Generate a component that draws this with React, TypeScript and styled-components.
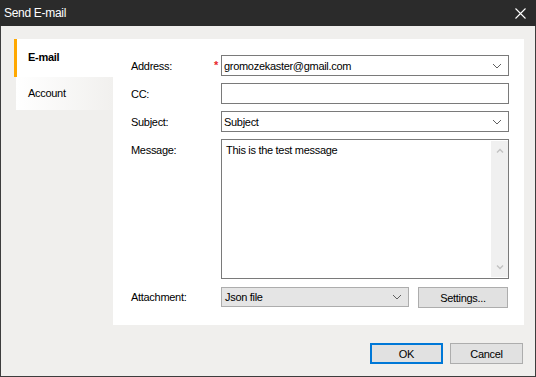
import React from 'react'
import styled, { createGlobalStyle } from 'styled-components'

const GlobalStyle = createGlobalStyle`
  html, body {
    margin: 0;
    padding: 0;
    background: #f0efed;
  }
  body {
    font-family: "Liberation Sans", Arial, sans-serif;
    font-size: 11px;
    letter-spacing: -0.3px;
    color: #000;
  }
`

const Window = styled.div`
  box-sizing: border-box;
  width: 536px;
  height: 377px;
  display: flex;
  flex-direction: column;
  background: #f0efed;
  border: 1px solid #3d3d3d;
  border-top: none;
`

const TitleBar = styled.div`
  height: 26px;
  margin: 0 -1px;
  flex: none;
  display: flex;
  align-items: center;
  justify-content: space-between;
  background: #2b2b2b;
  color: #fff;
  font-size: 12px;
  padding: 0 10px 0 4px;
`

const Body = styled.div`
  flex: 1;
  display: flex;
  flex-direction: column;
  padding: 13px 11px 12px 13px;
  min-height: 0;
`

const Main = styled.div`
  display: flex;
  height: 286px;
`

const TabList = styled.div`
  width: 99px;
  display: flex;
  flex-direction: column;
`

const Tab = styled.div<{ $active?: boolean }>`
  box-sizing: border-box;
  display: flex;
  align-items: center;
  height: ${p => (p.$active ? '38px' : '33px')};
  margin-left: ${p => (p.$active ? '0' : '2px')};
  padding-left: ${p => (p.$active ? '11px' : '12px')};
  padding-bottom: 2px;
  border-left: ${p => (p.$active ? '3px solid #ffa800' : 'none')};
  background: ${p => (p.$active ? '#fff' : 'linear-gradient(to right, #ffffff, #f1f0ee)')};
  font-weight: ${p => (p.$active ? 700 : 400)};
`

const Panel = styled.div`
  flex: 1;
  background: #fff;
  padding: 16px 15px 17px 18px;
  display: grid;
  grid-template-columns: 90px 1fr;
  grid-template-rows: 21px 21px 21px 140px 21px;
  row-gap: 7px;
`

const Label = styled.div<{ $top?: boolean }>`
  position: relative;
  display: flex;
  align-items: ${p => (p.$top ? 'flex-start' : 'center')};
  padding-top: ${p => (p.$top ? '5px' : '0')};
`

const Required = styled.span`
  position: absolute;
  right: 3px;
  top: 4px;
  color: #e8262a;
  font-size: 11px;
  font-weight: 700;
`

const Field = styled.div`
  box-sizing: border-box;
  display: flex;
  align-items: center;
  border: 1px solid #7a7a7a;
  background: #fff;
  padding: 0 0 0 2px;
`

const FieldText = styled.span`
  flex: 1;
`

const Chevron = styled.svg`
  width: 10px;
  height: 6px;
  margin-right: 6px;
  flex: none;
`

const MessageBox = styled.div`
  box-sizing: border-box;
  border: 1px solid #7a7a7a;
  display: flex;
  padding: 1px 0 1px 4px;
`

const MessageText = styled.div`
  flex: 1;
  padding-top: 3px;
`

const ScrollBar = styled.div`
  width: 17px;
  background: #f0f0f0;
  display: flex;
  flex-direction: column;
  justify-content: space-between;
  align-items: center;
  padding: 7px 0;
`

const AttachRow = styled.div`
  display: flex;
  gap: 9px;
  margin-top: 1px;
`

const Select = styled.div`
  box-sizing: border-box;
  width: 188px;
  display: flex;
  align-items: center;
  background: #e5e5e5;
  border: 1px solid #adadad;
  padding-left: 3px;
`

const Button = styled.div<{ $default?: boolean; $w: number }>`
  box-sizing: border-box;
  width: ${p => p.$w}px;
  height: 21px;
  display: flex;
  align-items: center;
  justify-content: center;
  background: #e1e1e1;
  border: ${p => (p.$default ? '2px solid #0078d7' : '1px solid #adadad')};
`

const Footer = styled.div`
  margin-top: 18px;
  display: flex;
  justify-content: flex-end;
  gap: 7px;
  padding-right: 1px;
`

const ArrowDown = ({ color = '#606060' }: { color?: string }) => (
  <Chevron viewBox="0 0 10 6">
    <path d="M1 1 L5 5 L9 1" fill="none" stroke={color} strokeWidth="1" />
  </Chevron>
)

const SmallArrow = ({ up }: { up?: boolean }) => (
  <svg width="8" height="5" viewBox="0 0 8 5">
    <path d={up ? 'M1 4.5 L4 1.5 L7 4.5' : 'M1 0.5 L4 3.5 L7 0.5'} fill="none" stroke="#c2c2c2" strokeWidth="1.4" />
  </svg>
)

export default function App() {
  return (
    <>
      <GlobalStyle />
      <Window>
        <TitleBar>
          <span>Send E-mail</span>
          <svg width="11" height="11" viewBox="0 0 11 11">
            <path d="M0.5 0.5 L10.5 10.5 M10.5 0.5 L0.5 10.5" stroke="#fff" strokeWidth="1.1" />
          </svg>
        </TitleBar>
        <Body>
          <Main>
            <TabList>
              <Tab $active>E-mail</Tab>
              <Tab>Account</Tab>
            </TabList>
            <Panel>
              <Label>
                Address:
                <Required>*</Required>
              </Label>
              <Field>
                <FieldText>gromozekaster@gmail.com</FieldText>
                <ArrowDown />
              </Field>

              <Label>CC:</Label>
              <Field />

              <Label>Subject:</Label>
              <Field>
                <FieldText>Subject</FieldText>
                <ArrowDown />
              </Field>

              <Label $top>Message:</Label>
              <MessageBox>
                <MessageText>This is the test message</MessageText>
                <ScrollBar>
                  <SmallArrow up />
                  <SmallArrow />
                </ScrollBar>
              </MessageBox>

              <Label>Attachment:</Label>
              <AttachRow>
                <Select>
                  <FieldText>Json file</FieldText>
                  <ArrowDown />
                </Select>
                <Button $w={90}>Settings...</Button>
              </AttachRow>
            </Panel>
          </Main>
          <Footer>
            <Button $default $w={73}>OK</Button>
            <Button $w={73}>Cancel</Button>
          </Footer>
        </Body>
      </Window>
    </>
  )
}
